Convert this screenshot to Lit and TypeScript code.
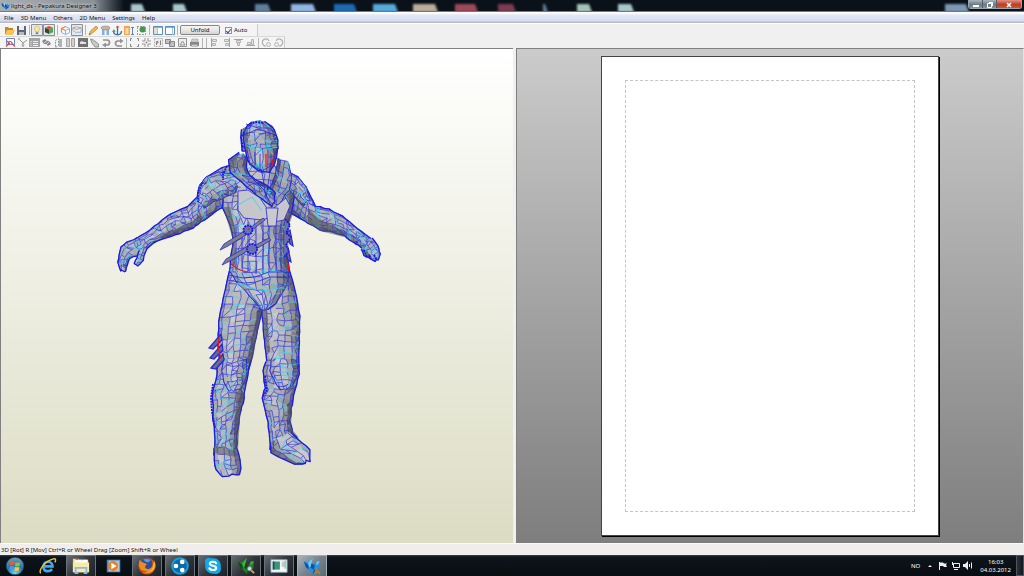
import { LitElement, html, svg, css, SVGTemplateResult } from "lit";
import { customElement, property } from "lit/decorators.js";
import { classMap } from "lit/directives/class-map.js";

/* ---------- wireframe figure ---------- */

type Section = [number, number, number, number];
interface Part { rows: Section[]; cols: number; step: number; dark: number; inner?: boolean; }

const parts: Part[] = [
  // arms
  { cols: 7, step: 5, dark: 0.1, rows: [[233,164,236,205],[222,168,224,207],[209,175,216,211],[200,185,208,217],[198,196,201,222],[187,207,193,228],[170,214,180,233],[158,223,166,238],[146,233,153,243],[135,239,146,250]] },
  { cols: 4, step: 4, dark: 0.1, rows: [[137,238,147,248],[127,242,141,256],[121,247,133,257],[119,254,129,259],[118,262,127,265],[121,271,126,271]] },
  { cols: 2, step: 4, dark: 0, rows: [[139,250,147,248],[137,258,143,260],[134,264,138,266]] },
  { cols: 7, step: 5, dark: 0.15, rows: [[284,172,284,210],[298,176,293,214],[306,187,301,219],[311,198,308,223],[316,206,320,230],[329,209,333,232],[342,216,344,236],[354,225,353,242],[366,235,361,247],[374,240,365,252]] },
  { cols: 4, step: 3, dark: 0.1, rows: [[372,238,361,249],[378,246,364,255],[380,254,371,259],[378,260,374,261]] },
  // torso
  { cols: 11, step: 9, dark: 0, rows: [[236,164,286,166],[226,180,294,180],[223,195,294,195],[223,208,292,212],[230,225,287,226],[233,240,286,240],[231,255,287,256],[230,268,289,270],[229,276,290,277]] },
  // shoulder plates
  { cols: 6, step: 4, dark: 0.1, inner: true, rows: [[232,174,238,186],[219,172,236,192],[206,177,226,197],[199,187,214,202],[197,198,204,208]] },
  { cols: 5, step: 4, dark: 0.15, inner: true, rows: [[287,172,286,184],[298,177,290,190],[306,187,296,199],[310,198,303,206]] },
  // upper legs
  { cols: 7, step: 6, dark: 0.05, rows: [[230,270,262,274],[225,290,265,294],[219,317,262,312],[218,340,256,337],[219,358,252,358],[219,370,249,370]] },
  { cols: 7, step: 6, dark: 0.05, rows: [[258,274,289,270],[262,294,295,290],[262,312,300,316],[265,347,299,347],[267,360,299,362],[267,372,299,373]] },
  // pelvis
  { cols: 8, step: 7, dark: 0, inner: true, rows: [[230,272,289,272],[238,284,287,284],[250,296,282,294],[258,306,276,304],[262,310,270,308]] },
  // lower legs
  { cols: 6, step: 5, dark: 0.1, rows: [[218,360,251,360],[217,374,248,374],[213,390,245,388],[213,400,243,403],[213,418,240,414],[215,435,237,433],[214,455,237,452]] },
  { cols: 6, step: 5, dark: 0.1, rows: [[266,362,299,364],[263,370,299,374],[265,388,295,390],[262,398,292,405],[268,422,290,420],[270,438,293,433],[270,450,299,441]] },
  // knee pads
  { cols: 5, step: 4, dark: 0, inner: true, rows: [[224,358,247,359],[222,370,247,371],[224,382,245,381],[229,391,240,390]] },
  { cols: 5, step: 4, dark: 0, inner: true, rows: [[272,358,296,360],[270,371,298,372],[275,383,294,383],[280,390,289,390]] },
  // boots
  { cols: 5, step: 6, dark: 0, rows: [[214,448,237,448],[214,460,240,460],[216,470,241,468],[221,476,239,475]] },
  { cols: 5, step: 6, dark: 0, rows: [[290,432,270,443],[298,440,271,453],[306,446,283,459],[310,450,294,464],[310,460,303,464]] },
  // collar
  { cols: 4, step: 5, dark: 0.3, inner: true, rows: [[289,164,278,158],[292,176,276,170],[289,190,272,184],[278,205,264,196]] },
  { cols: 4, step: 5, dark: 0.4, rows: [[239,152,248,158],[229,160,246,167],[230,172,250,175],[242,183,258,181],[256,195,268,186],[272,206,276,194]] },
  // head
  { cols: 2, step: 4, dark: 0.3, rows: [[241,129,248,127],[241,140,248,140],[242,151,249,151]] },
  { cols: 8, step: 4, dark: 0.15, rows: [[252,122,265,122],[247,126,272,127],[244,132,276,133],[244,140,278,140],[245,149,278,149]] },
  { cols: 6, step: 12, dark: 0.15, rows: [[245,148,278,148],[247,157,277,157],[250,164,274,165],[259,171,270,171]] },
];

function makeRandom(seed: number) {
  let s = seed;
  return () => {
    s = (s * 1664525 + 1013904223) >>> 0;
    return s / 4294967296;
  };
}

function meshPart(part: Part, seed: number): SVGTemplateResult {
  const rnd = makeRandom(seed);
  const lines: Section[] = [];
  for (let i = 0; i < part.rows.length - 1; i++) {
    const a = part.rows[i], b = part.rows[i + 1];
    const len = Math.hypot((b[0] + b[2] - a[0] - a[2]) / 2, (b[1] + b[3] - a[1] - a[3]) / 2);
    const n = Math.max(1, Math.round(len / part.step));
    for (let k = 0; k < n; k++) lines.push(a.map((v, j) => v + (b[j] - v) * k / n) as Section);
  }
  lines.push(part.rows[part.rows.length - 1]);
  const grid = lines.map((r) => {
    const pts: number[][] = [];
    for (let c = 0; c <= part.cols; c++) {
      const t = 0.5 - Math.cos(Math.PI * c / part.cols) / 2;
      const u = t * 0.5 + (c / part.cols) * 0.5;
      const inner = c > 0 && c < part.cols ? 2.8 : 1;
      pts.push([r[0] + (r[2] - r[0]) * u + (rnd() - 0.5) * inner, r[1] + (r[3] - r[1]) * u + (rnd() - 0.5) * inner]);
    }
    return pts;
  });
  const p = (q: number[]) => `${q[0].toFixed(1)} ${q[1].toFixed(1)}`;
  const faces: SVGTemplateResult[] = [];
  let blue = "", cyan = "";
  for (let i = 0; i < grid.length - 1; i++) {
    for (let c = 0; c < part.cols; c++) {
      const [A, B, C, D] = [grid[i][c], grid[i][c + 1], grid[i + 1][c + 1], grid[i + 1][c]];
      const u = (c + 0.5) / part.cols;
      const edge = Math.pow(Math.abs(u - 0.38) * 1.7, 2);
      const g = Math.round(210 - edge * 105 - part.dark * 90 - rnd() * 26);
      const fill = `rgb(${g},${g},${g + 3})`;
      faces.push(svg`<path d="M${p(A)}L${p(B)}L${p(C)}L${p(D)}Z" fill=${fill} stroke=${fill} stroke-width=".4"/>`);
      if (rnd() < 0.84) blue += `M${p(A)}L${p(D)}`;
      const h = rnd();
      if (h < 0.5) blue += `M${p(A)}L${p(B)}`;
      else if (h < 0.74) cyan += `M${p(A)}L${p(B)}`;
      const d = rnd();
      if (d < 0.14) cyan += `M${p(A)}L${p(C)}`;
      else if (d < 0.22) cyan += `M${p(B)}L${p(D)}`;
      else if (d < 0.38) blue += `M${p(B)}L${p(D)}`;
    }
  }
  const last = grid.length - 1;
  const side = (c: number) => grid.map((r, i) => (i ? "L" : "M") + p(r[c])).join("");
  const outline = side(0) + side(part.cols) + grid[last].map((q, i) => (i ? "L" : "M") + p(q)).join("");
  return svg`${faces}
    <path d=${blue} stroke="#2a2ae0" stroke-width=".65" fill="none"/>
    <path d=${cyan} stroke="#3cd4ea" stroke-width=".75" fill="none"/>
    <path d=${outline} stroke="#1c1ce0" stroke-width=${part.inner ? 0.7 : 1.3} stroke-linejoin="round" fill="none"/>`;
}

const figure = svg`
  ${parts.map((part, i) => meshPart(part, 77 + i * 913))}
  <g fill="#55555c" fill-opacity=".55">
    <path d="M223 207l7 0 5 22 0 36 -4 0 2 -25zM286 214l7 0 -5 14 1 42 -6 0zM230 160l8 -6 -2 12 -6 4zM262 310l5 -2 3 44 -4 0zM257 315l4 -2 -8 45 -4 6 -2 -4zM237 392l5 -3 -4 60 -5 0zM214 445l22 6 0 6 -22 -4zM287 404l5 0 -1 24 8 10 -10 -6zM244 130l4 -2 0 24 -3 -4zM160 235l32 -12 8 -10 2 7 -12 8 -28 10zM308 208l10 10 30 16 -4 3 -24 -6 -12 -8z"/>
  </g>
  <g fill="none" stroke="#2424dc" stroke-width=".8">
    <path fill="#c6c6cb" d="M238 191l10 -1 12 8 8 12 0 8 -6 2 -18 -2 -6 -8zM274 208l12 -10 4 8 -6 14 -10 2z"/>
    <path fill="#c9c9ce" d="M266 208l12 0 -2 18 -8 0zM236 226l0 44M242 236v32M248 222v50M256 224v50M263 222v52M269 226v46M276 226v45M281 224v48"/>
    <path d="M229 275l14 3 12 -1 14 -5 20 0M228 280l16 3 12 -1 14 -5 20 0M246 124l12 4 14 0M244 135l14 -6 18 6"/>
    <path stroke="#28d8ee" d="M246 143l14 5 17 -3M247 146l13 5 17 -4M238 205l14 -8 10 14M236 283l26 8 22 -4"/>
    <path d="M247 150l3 14 12 7 10 -6 5 -17M255 152v14M260 154v16M271 154v14M262 172l4 26 4 -26M250 176l14 14 8 18"/>
    <path fill="#808088" d="M220 250l4 -6 22 -14 3 3 -21 13zM250 228l13 -10 2 2 -13 10zM222 265l4 -6 22 -13 3 3 -21 12zM254 246l15 -8 2 2 -15 9z"/>
    <path fill="#6a6a90" stroke-width="1.2" d="M209 348l12 -14 1 6 -9 9zM210 358l12 -14 1 6 -9 9zM211 368l12 -14 1 6 -8 9zM290 230l3 16 -3 -2 -3 -12zM288 248l3 14 -3 -2 -3 -10z"/>
  </g>
  <g fill="#6a70b0" stroke="#1818e0" stroke-width="1.8" stroke-dasharray="2 .8">
    <circle cx="248" cy="230" r="4.500"/><circle cx="252" cy="249" r="5"/>
    <path d="M285 219l5 6 -4 8 5 4 -5 8 3 6 -5 6"/>
    <path fill="none" d="M244 132l-3 6 2 10M250 124l6 -2 8 1M364 250l3 8M369 255l2 4M374 255l3 5M213 384l-2 14 1 14 3 16M265 376l2 14 -4 6M227 166l-4 8 0 6M203 182l-5 10 0 10"/>
  </g>
  <g fill="none" stroke="#f01018" stroke-width="1.2">
    <path d="M266 154v13M274 154l-2 12M231 264l7 5 5 2 4 1M288 264l1 8M219 338l-1 10 3 10M248 229h2"/>
  </g>`;

/* ---------- glyphs ---------- */

const g = "#858585";
const glyphs: Record<string, SVGTemplateResult> = {
  open: svg`<path fill="#b57c17" d="M1 2h3l1 1h4v6H1z"/><path fill="#f5bd45" d="M3 5h8L9 10H1z"/>`,
  save: svg`<path fill="#4a5560" d="M1 1h9v9H1z"/><path fill="#e8eef4" d="M3 1h5v4H3z"/><path fill="#a8b4c0" d="M3 7h5v3H3z"/>`,
  bulb: svg`<path fill="#ffe783" stroke="#b8a050" stroke-width=".6" d="M5.500 1a3 3 0 0 1 2 5L7 7.500H4L3.500 6a3 3 0 0 1 2-5z"/><path fill="#667" d="M4.200 8h2.600v2H4.200z"/>`,
  cube: svg`<path fill="#e33a2a" d="M1 3l4.500-2L10 3 5.500 5z"/><path fill="#2aa53b" d="M5.500 5L10 3v5l-4.500 2z"/><path fill="#17351a" d="M1 3l4.500 2v5L1 8z"/>`,
  box: svg`<path fill="#f8fbff" stroke="#79b1de" d="M1.500 3.500l4-2 4 2v4l-4 2-4-2zM5.500 5.500v4M5.500 5.500l4-2"/><path stroke="#f07a22" stroke-width="1.200" fill="none" d="M1.500 7V3.500l4 2M2 3.500l3.500-2"/>`,
  boxflat: svg`<path fill="#e6f1fb" stroke="#79add8" d="M1 3l4-1 5 1v5H4L1 6z"/><path stroke="#e67834" fill="none" d="M1 3l4 2 5-2"/>`,
  pencil: svg`<path fill="#f0b030" stroke="#84611c" stroke-width=".6" d="M1 10l1.500-4L8 1l2 2-5.500 5z"/><path fill="#333" d="M1 10l.5-1.500 1 1z"/>`,
  drum: svg`<path fill="#6fa8df" d="M2 4h7v6H2z"/><path fill="#eef7ff" d="M4.500 5h2v5h-2z"/><ellipse cx="5.500" cy="3" rx="4.500" ry="2" fill="#e2a468" stroke="#5b8fc0" stroke-width=".7"/>`,
  anchor: svg`<path fill="none" stroke="#245b9c" stroke-width="1.300" d="M5.500 3v7M1.500 6c0 5 8 5 8 0"/><circle cx="5.500" cy="2" r="1.300" fill="#d63f3f"/><path fill="#3a9a42" d="M0 7l2-3 1.500 3z"/>`,
  scale: svg`<path fill="#f39a3a" d="M0 1h6v9H0z"/><path fill="#ffd9a6" d="M1.500 3h3v6h-3z"/><path stroke="#4a78b0" fill="none" d="M8.500 2v8M7 2.500h3M7 9.500h3"/>`,
  select3d: svg`<path fill="none" stroke="#234" stroke-dasharray="1 2" d="M1.500 1.500h8v8h-8z"/><circle cx="6.500" cy="4.500" r="3" fill="#2c8a31"/>`,
  winL: svg`<path fill="#fff" stroke="#4682b8" d="M1.500 1.500h9v8h-9z"/><path fill="#e3dcc4" d="M2 3h3v6H2z"/><path stroke="#9dbcd8" d="M5.500 3v6"/><path stroke="#4682b8" d="M1 2.200h9"/>`,
  winR: svg`<path fill="#fff" stroke="#4682b8" d="M1.500 1.500h9v8h-9z"/><path stroke="#9dbcd8" d="M8.500 2v8"/><path stroke="#4682b8" d="M1 2.200h9"/>`,
  redo2d: svg`<path fill="#fff" stroke="#5a76c4" d="M1.500 1.500h8v6h-8z"/><path stroke="#e02a2a" stroke-width="1.200" fill="none" d="M2 4l3 3M3 6.500a2 2 0 1 1 4 0l3 3M1 9.500l3-3"/>`,
  nodes: svg`<path stroke=${g} fill="none" d="M2 2l4 4 4-3M6 6v4"/><circle cx="2" cy="2" r="1.300" fill="#bbb"/><circle cx="6" cy="8" r="1.500" fill="#aaa"/>`,
  list: svg`<path fill="#999" d="M0 1h11v9H0z"/><path stroke="#eee" d="M1.500 4.500h1M4 4.500h5M1.500 6.500h1M4 6.500h5M1.500 8.500h1M4 8.500h5"/>`,
  join: svg`<path fill="#777" d="M1 4l3-2 2 2 2 0 2 3-3 2-2-2-2 0z"/><path stroke="#ddd" d="M3 6l4-3M5 8l3-3"/>`,
  split: svg`<path fill="none" stroke=${g} stroke-dasharray="2 1" d="M2.500 3.500l3-2v7l-3 2z"/><path fill="#aaa" d="M6 2h3v8H6z"/>`,
  pages: svg`<path fill="#ccc" stroke="#9a9a9a" d="M1.500 1.500h3v8h-3zM6.500 1.500h3v8h-3z"/>`,
  dark: svg`<path fill="#606060" d="M1 1h10v9H1z"/><path fill="#e0e0e0" d="M3 5l2-1 2 1h2v2H3z"/>`,
  hand: svg`<path fill="#c4c4c4" stroke=${g} d="M1.500 2l3 1 5 4v3H6L3 6z"/>`,
  turnR: svg`<path fill="none" stroke=${g} stroke-width="1.700" d="M2 3h4a2.500 2.500 0 0 1 0 5H4"/><path fill=${g} d="M5 5.500v5L1 8z"/>`,
  turnL: svg`<path fill="none" stroke=${g} stroke-width="1.700" d="M9 9H5a2.500 2.500 0 0 1 0-5h3"/><path fill=${g} d="M7 1.500v5L10.500 4z"/>`,
  crop: svg`<path fill="none" stroke="#777" d="M3 1.500H1.500V4M8 1.500h1.500V4M3 9.500H1.500V7M8 9.500h1.500V7"/>`,
  center: svg`<path fill="none" stroke="#888" d="M1 4h3V1M7 1v3h3M1 7h3v3M7 10V7h3"/><circle cx="5.500" cy="5.500" r="1" fill="#777"/>`,
  note: svg`<path fill="#eee" stroke="#aaa" stroke-dasharray="2 1" d="M1.500 1.500h8v8h-8z"/><path stroke="#777" fill="none" d="M3.500 8V4.500H5V6H4M7.500 3.500V8"/>`,
  copy: svg`<path fill="#bbb" stroke="#777" d="M.5 2.500h5v4h-5zM4.500 4.500h5v5h-5z"/>`,
  photo: svg`<path fill="#eee" stroke=${g} d="M1.500 1.500h8v8h-8z"/><path fill="none" stroke=${g} d="M3 8l2.500-4L8 8z"/>`,
  print: svg`<path fill="#777" d="M1 5h9v4H1z"/><path fill="#ccc" stroke=${g} stroke-width=".5" d="M3 2h6v3H2zM2.500 7.500h6v2h-6z"/>`,
  alL: svg`<path stroke="#999" d="M2.500 1v9"/><path fill="#e4e4e4" stroke="#aaa" d="M3.500 2.500h4v2h-4zM3.500 6.500h3v2h-3z"/>`,
  alR: svg`<path stroke="#999" d="M8.500 1v9"/><path fill="#e4e4e4" stroke="#aaa" d="M3.500 2.500h4v2h-4zM4.500 6.500h3v2h-3z"/>`,
  alT: svg`<path stroke="#999" d="M1 2.500h9"/><path fill="#e4e4e4" stroke="#aaa" d="M3.500 3.500h4v2h-4zM4.500 5.500h2v3h-2z"/>`,
  alB: svg`<path stroke="#999" d="M1 8.500h9"/><path fill="#e4e4e4" stroke="#aaa" d="M2.500 5.500h3v2h-3zM6.500 2.500h2v5h-2z"/>`,
  rotL: svg`<path fill="none" stroke="#aaa" stroke-width="1.200" d="M5 9A3.500 3.500 0 1 1 8 4"/><circle cx="7.500" cy="7.500" r="2" fill="#eee" stroke="#aaa"/>`,
  rotR: svg`<path fill="none" stroke="#aaa" stroke-width="1.200" d="M6 9A3.500 3.500 0 1 0 3 4"/><circle cx="3.500" cy="7.500" r="2" fill="#eee" stroke="#aaa"/>`,
};

/* folded-paper bird: main, shaded and lit facets */
const bird = (a: string, b: string, c: string) => svg`
  <path fill=${a} d="M1 5l5 1 5-5-2 6 4 2 2-4 4 0-1 8-7 6-5-5-3-3z"/>
  <path fill=${b} d="M9 7l4 2-1 5-4-2zM1 5l5 4 0 5-3-3zM18 13l-7 6 1-5z"/>
  <path fill=${c} d="M6 6l5-5-3 11-2-3zM15 5l4 0-4 5z"/>`;

const apps: Record<string, SVGTemplateResult> = {
  orb: svg`<defs><radialGradient id="o" cx=".5" cy=".9" r=".9"><stop offset="0" stop-color="#6fd8f5"/><stop offset=".5" stop-color="#2a72a8"/><stop offset="1" stop-color="#7d9cb4"/></radialGradient></defs>
    <circle cx="10" cy="10" r="9.700" fill="url(#o)" stroke="#1d4566" stroke-width=".7"/>
    <path fill="#e8602c" d="M5 5.500c2-1 3-1 4.500 0L9 9.500c-1.500-.8-3-.8-4.500 0z"/><path fill="#8cc63e" d="M10.500 5.800c1.500.8 3 .8 5 0L15 10c-2 .7-3.500.5-5 0z"/>
    <path fill="#3fa0e6" d="M4.300 10.500c1.700-.8 3-.7 4.500 0l-.6 4c-1.500-.8-3-.8-4.500 0z"/><path fill="#fcc52b" d="M9.900 11c1.600.7 3 .7 4.900 0l-.5 4c-2 .7-3.400.6-5 0z"/>`,
  ie: svg`<path fill="none" stroke="#3fa9f0" stroke-width="3" d="M5 10.500h10c0-7-10-7-10 0s7 6 9.500 3"/><path fill="none" stroke="#f2c230" stroke-width="1.500" d="M2 18c-3-3 5-14 14-16 3-.5 3 1.500 1.500 4"/>`,
  explorer: svg`<path fill="#f3d77c" d="M1 2h6l1 1h10v14H1z"/><path fill="#fff" d="M3 3h14v4H3z"/><path fill="#d64" d="M4 2h3v1.500H4z"/><path fill="#5a5" d="M10 2h3v1.500h-3z"/><path fill="#f9e8a8" d="M1 6h18v11H1z"/><path fill="none" stroke="#86bce4" stroke-width="2" d="M4 18v-6h12v6M3 18h4M13 18h4"/>`,
  wmp: svg`<path fill="#4f87b8" d="M2 3h15v14H2z"/><path fill="#a6c8e2" d="M4 4h12v12H4z"/><circle cx="9" cy="10" r="5.500" fill="#ef7d23"/><path fill="#fff" d="M7 6.500l6 3.500-6 3.500z"/>`,
  firefox: svg`<circle cx="10" cy="10" r="9.500" fill="#dd5317"/><circle cx="9.500" cy="7.500" r="6.500" fill="#2a4f9c"/><path fill="#5b9ad8" d="M6 3c3-2 6-1 8 1l-3 2-3-1z"/><path fill="#f08a20" d="M2 3c1 2 2 3 4 3l4 2-2 2 0 2c3 3 8 1 9-4l1-4c4 8-1 14-8 14C3 18-1 11 2 3z"/><path fill="#fbc52e" d="M18 5c2 8-2 12-8 12 5-1 7-5 7-9z"/><path fill="#cc430c" d="M1 8c0 6 4 8 9 8-5 3-10-1-9-8z"/>`,
  balls: svg`<circle cx="10" cy="10" r="9.800" fill="#1b9bd8"/><circle cx="10" cy="10" r="7.500" fill="#0a6ba8"/><g fill="#fff"><circle cx="5.500" cy="10" r="2.600"/><circle cx="12.500" cy="5.500" r="2.600"/><circle cx="12.500" cy="14.500" r="2.600"/></g>`,
  skype: svg`<path fill="#12a8ea" d="M1 5C1 1 5 0 8 1.500c7-1.500 12 4 10.500 10C20 16 16 20 12 18.500 5 19.500 0 14 1.500 8z"/><path fill="none" stroke="#fff" stroke-width="2.400" stroke-linecap="round" d="M13.500 7c-1-2.500-7-2.300-7 .5 0 3 7 1.500 7 4.700 0 3-6.500 3-7.500.3"/>`,
  viewer: svg`${bird("#1f7d27", "#0d4c16", "#3fae45")}<path stroke="#e4a070" stroke-width="2" d="M15 14l4 4"/><circle cx="14" cy="13" r="2.500" fill="#ccd6e4" stroke="#777"/>`,
  panel: svg`<path fill="#f5f8fa" stroke="#8ca0ad" d="M1 3h18v14H1z"/><path fill="#3c9470" d="M3 5h8v9H3z"/><path fill="#234c70" d="M3 5h2v9H3z"/><path fill="#bcc9d2" d="M13 5h4v6h-4z"/><path fill="#9fd0a0" d="M16 4h2v9h-2z"/>`,
  designer: svg`${bird("#2491e2", "#0a55a8", "#7cc8fa")}<path stroke="#a68343" stroke-width="1.800" fill="none" d="M13 19l2-6 4 6M14 17h4"/>`,
};

@customElement("tool-icon")
class ToolIcon extends LitElement {
  @property() name = "";
  @property({ type: Boolean }) pressed = false;
  static styles = css`
    :host { display: block; }
    button { display: flex; align-items: center; justify-content: center; width: 12px; height: 12px; padding: 0; border: 0; background: none; }
    .pressed { background: #e4e8ec; box-shadow: inset 0 0 0 1px #8c9197; border-radius: 1px; }
    svg { width: 11px; height: 11px; display: block; opacity: .88; }
    .pressed svg { width: 10px; height: 10px; }
  `;
  render() {
    return html`<button type="button" aria-label=${this.name} class=${classMap({ pressed: this.pressed })}>
      <svg viewBox="0 0 11 11" fill="none">${glyphs[this.name]}</svg></button>`;
  }
}

const row1 = ["open", "save", "|", "bulb*", "cube*", "|", "box", "boxflat*", "|", "pencil", "drum", "anchor", "scale", "select3d", "|", "winL", "winR", "|"];
const row2 = ["redo2d", "nodes", "list", "join", "split", "pages", "dark", "hand", "turnR", "turnL", "|", "crop", "center", "note", "copy", "photo", "print", "|", "|", "alL", "alR", "alT", "alB", "|", "rotL", "rotR"];

@customElement("app-root")
class AppRoot extends LitElement {
  static styles = css`
    :host { display: flex; flex-direction: column; height: 100vh; overflow: hidden; background: #f0f0f0; font-family: "Noto Sans", "Open Sans", sans-serif; font-size: 6px; line-height: 8px; color: #111; }
    * { box-sizing: border-box; }
    button { font: inherit; color: inherit; }
    svg { display: block; }

    .title { display: flex; height: 12px; background: #0b1119; border-bottom: 1px solid #777; flex: none; position: relative; }
    .backdrop { position: absolute; inset: 0; width: 100%; height: 11px; }
    .caption { position: relative; display: flex; align-items: center; gap: 1px; height: 11px; padding: 0 4px 0 1px; margin: 0; font-weight: 400; font-size: 6px; color: #06080a; }
    .caption svg { width: 9px; height: 9px; }
    .caption span { text-shadow: 0 0 3px #fff, 0 0 4px #ccd; }
    .winbtns { position: relative; display: flex; margin-left: auto; margin-right: 2px; height: 9px; border: 1px solid #9aa5ae; border-top: 0; border-radius: 0 0 3px 3px; overflow: hidden; }
    .winbtns button { width: 14px; height: 9px; padding: 0; border: 0; border-right: 1px solid #56606a; background: linear-gradient(#a9b4bd, #6d7b87 50%, #8f9ca6); display: flex; align-items: center; justify-content: center; }
    .winbtns .close { width: 24px; border: 0; background: linear-gradient(#dd9484, #c23c22 50%, #d85a3a); }

    .menu { display: flex; align-items: center; gap: 7px; padding: 0 4px; flex: none; height: 11px; background: linear-gradient(#fff 0, #fff 1px, #e3e8f6 3px, #d5dcf0 9px, #b9bcc6 10px); }
    .menu button { border: 0; background: none; padding: 0; white-space: nowrap; }

    .bars { flex: none; display: flex; flex-direction: column; align-items: flex-start; height: 25px; border-top: 1px solid #fff; }
    .bar { display: flex; align-items: center; height: 12px; padding-left: 3px; border-right: 1px solid #ccc; background: #f4f4f4; }
    .bar.second { padding-left: 4px; border-top: 1px solid #d8d8d8; }
    .sep { width: 4px; height: 10px; display: flex; justify-content: center; }
    .sep::before { content: ""; width: 1px; background: #b4b4b4; }
    .unfold { width: 40px; height: 10px; margin: 0 5px 0 1px; padding: 0; line-height: 8px; border: 1px solid #888; border-radius: 2px; background: linear-gradient(#f4f4f4, #e8e8e8 50%, #d4d4d4); }
    .auto { display: flex; align-items: center; gap: 2px; padding-right: 10px; }
    .auto input { appearance: none; margin: 0; width: 7px; height: 7px; border: 1px solid #8a93a0; background: #f6f8fc; display: grid; place-items: center; }
    .auto input:checked::before { content: ""; width: 2px; height: 4px; border: solid #2b4ba0; border-width: 0 1px 1px 0; transform: rotate(40deg); }

    .work { flex: 1; min-height: 0; display: grid; grid-template-columns: 513fr 508fr; gap: 3px; background: #f0f0f0; }
    .pane { min-width: 0; min-height: 0; border-top: 1px solid #808080; border-left: 1px solid #808080; }
    .view3d { background: linear-gradient(#fff, #dcdcc4); }
    .view3d svg { width: 100%; height: 100%; }
    .view2d { display: flex; align-items: center; justify-content: center; background: linear-gradient(#cbcbcb, #7e7e7e); border-right: 1px solid #e4e4e4; }
    .sheet { height: 97%; aspect-ratio: 339 / 480; padding: 23px; background: #fff; border: 1px solid #444; box-shadow: 1px 1px 0 #000; }
    .margin { width: 100%; height: 100%; border: 1px dashed #c4c4c4; }

    .status { flex: none; height: 12px; padding: 2px 1px 0; background: #f0eded; border-top: 1px solid #fafafa; white-space: nowrap; }

    .taskbar { flex: none; display: flex; align-items: stretch; height: 21px; background: linear-gradient(#39424a, #0d141b 2px, #080d12); color: #fff; }
    .apps { display: flex; gap: 3px; }
    .apps button { width: 30px; padding: 0; border: 1px solid transparent; border-bottom: 0; background: none; display: flex; align-items: center; justify-content: center; }
    .apps .running { border-color: #6a7178; background: linear-gradient(135deg, #656c72, #30363c 50%, #1c2228); }
    .apps .active { border-color: #a5adb5; background: linear-gradient(135deg, #aab2ba, #78828b 50%, #5d6a75); }
    .apps svg { width: 18px; height: 18px; }
    .tray { margin-left: auto; display: flex; align-items: center; gap: 8px; }
    .tray svg { height: 9px; width: 44px; }
    .clock { text-align: center; padding-right: 5px; }
    .peek { align-self: stretch; width: 8px; padding: 0; border: 1px solid #4c555c; background: linear-gradient(90deg, #2b333a, #10161b); margin-left: -8px; }
  `;

  private tools(list: string[]) {
    return list.map((n) => n === "|"
      ? html`<span class="sep"></span>`
      : html`<tool-icon .name=${n.replace("*", "")} ?pressed=${n.endsWith("*")}></tool-icon>`);
  }

  render() {
    const lumps: [number, number, string][] = [
      [131, 14, "#a8c8cc"], [173, 14, "#a9c8cc"], [255, 16, "#5f7e9e"], [291, 25, "#8fb6e4"], [334, 23, "#1c6bb2"], [373, 25, "#55aadc"],
      [413, 25, "#bcae98"], [455, 23, "#9c4859"], [498, 18, "#7c3b50"], [543, 5, "#5f7e9e"], [577, 15, "#a4c2b8"], [618, 16, "#a8c8cc"], [945, 24, "#7c98b4"]];
    const running: [string, string, string][] = [
      ["orb", "Start", ""], ["ie", "Internet Explorer", ""], ["explorer", "Explorer", "running"], ["wmp", "Media Player", ""],
      ["firefox", "Firefox", "running"], ["balls", "Messenger", "running"], ["skype", "Skype", "running"], ["viewer", "Pepakura Viewer", "running"],
      ["panel", "Panel", "running"], ["designer", "Pepakura Designer", "active"]];
    return html`
      <header class="title">
        <svg class="backdrop" viewBox="0 0 1024 11" preserveAspectRatio="none">
          <defs><filter id="b" x="-20%" y="-50%" width="140%" height="200%"><feGaussianBlur stdDeviation="1"/></filter>
          <linearGradient id="t"><stop offset="0" stop-color="#a8adb2"/><stop offset=".75" stop-color="#8b9297"/><stop offset="1" stop-color="#0b1119"/></linearGradient></defs>
          <rect width="124" height="11" fill="url(#t)"/>
          <g filter="url(#b)">${lumps.map(([x, w, c]) => svg`<path fill=${c} d="M${x} 4h${w - 3}l3 8h-${w}z"/>`)}</g>
        </svg>
        <h1 class="caption"><svg viewBox="0 0 20 20">${bird("#1c84d8", "#0a4a98", "#9cd8fa")}</svg><span>light_ds - Pepakura Designer 3</span></h1>
        <div class="winbtns">
          <button type="button" aria-label="Minimize"><svg width="6" height="6"><path fill="#fff" d="M0 3h6v2H0z"/></svg></button>
          <button type="button" aria-label="Restore"><svg width="6" height="6" fill="none" stroke="#fff"><path d="M2 .5h3.500V4M.5 1.500h4v4h-4z"/></svg></button>
          <button type="button" class="close" aria-label="Close"><svg width="6" height="6" stroke="#fff" stroke-width="1.500"><path d="M1 1l4 4M5 1L1 5"/></svg></button>
        </div>
      </header>
      <nav class="menu">${["File", "3D Menu", "Others", "2D Menu", "Settings", "Help"].map((m) => html`<button type="button">${m}</button>`)}</nav>
      <div class="bars">
        <div class="bar">${this.tools(row1)}
          <button type="button" class="unfold">Unfold</button>
          <label class="auto"><input type="checkbox" checked />Auto</label>
        </div>
        <div class="bar second">${this.tools(row2)}</div>
      </div>
      <main class="work">
        <section class="pane view3d"><svg viewBox="1 49 512 494">${figure}</svg></section>
        <section class="pane view2d"><div class="sheet"><div class="margin"></div></div></section>
      </main>
      <footer class="status">3D [Rot] R [Mov] Ctrl+R or Wheel Drag [Zoom] Shift+R or Wheel</footer>
      <div class="taskbar">
        <div class="apps">${running.map(([n, l, c]) => html`<button type="button" aria-label=${l} class=${c}><svg viewBox="0 0 20 20">${apps[n]}</svg></button>`)}</div>
        <div class="tray">
          <span>NO</span>
          <svg viewBox="0 0 44 9" fill="none" stroke="#eee">
            <path fill="#eee" stroke="none" d="M0 6l2-2 2 2zM11 1h1v8h-1zM12 1.500h3l1 1h3L18 4l1 2h-3l-1-1h-3z"/>
            <path d="M25.500 2.500h6v4h-6zM24.500 1v3M26 8.500h4"/>
            <path fill="#eee" stroke="none" d="M35 3h2l3-3v9L37 6h-2z"/><path d="M41.500 3v3M43.500 1.500v6"/>
          </svg>
          <div class="clock"><div>16:03</div><div>04.03.2012</div></div>
          <button type="button" class="peek" aria-label="Show desktop"></button>
        </div>
      </div>`;
  }
}
